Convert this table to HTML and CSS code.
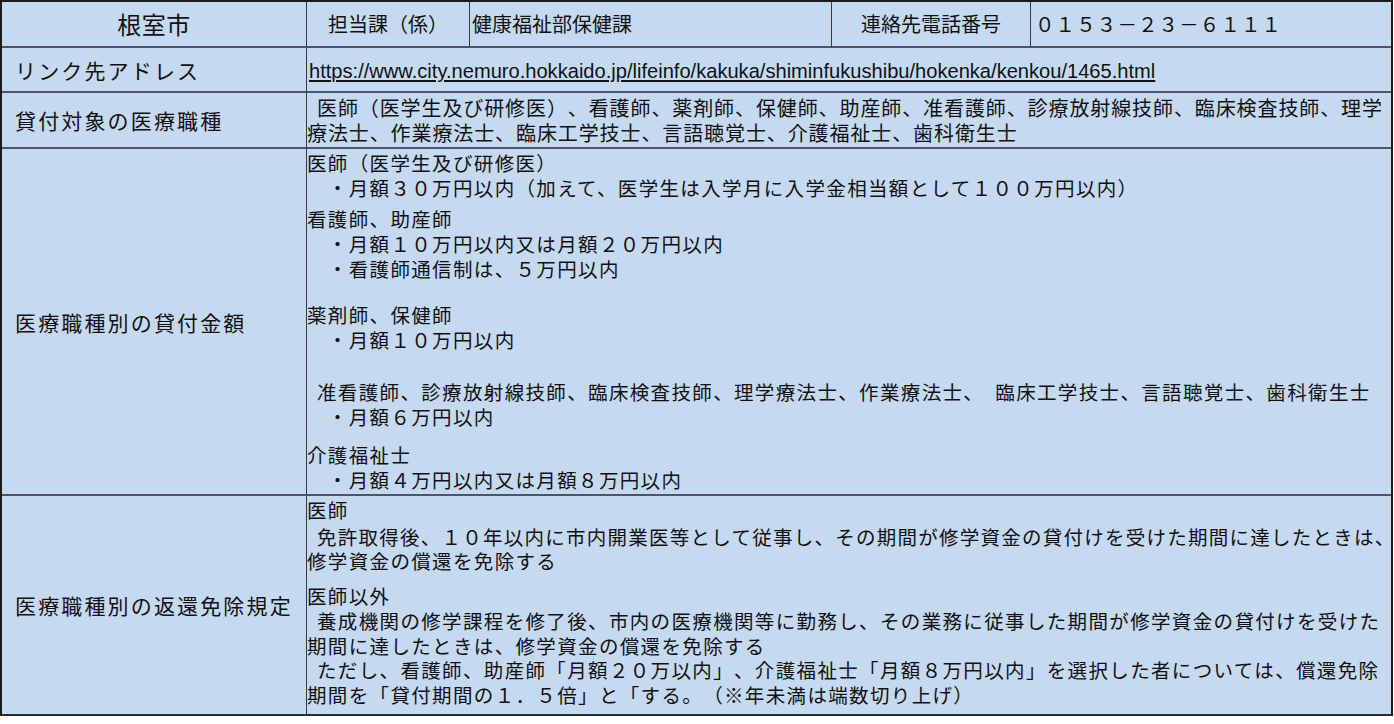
FILE: index.html
```html
<!DOCTYPE html>
<html lang="ja">
<head>
<meta charset="utf-8">
<title>根室市</title>
<link rel="stylesheet" href="styles.css">
</head>
<body>
<div class="sheet">
  <div class="cell head city">根室市</div>
  <div class="cell head center">担当課（係）</div>
  <div class="cell head left">健康福祉部保健課</div>
  <div class="cell head center">連絡先電話番号</div>
  <div class="cell head phone last">０１５３－２３－６１１１</div>

  <div class="cell label">リンク先アドレス</div>
  <div class="cell wide url-cell"><a class="url" href="#">https://www.city.nemuro.hokkaido.jp/lifeinfo/kakuka/shiminfukushibu/hokenka/kenkou/1465.html</a></div>

  <div class="cell label">貸付対象の医療職種</div>
  <div class="cell wide goth">
    <div class="lines">
      <div class="ind">医師（医学生及び研修医）、看護師、薬剤師、保健師、助産師、准看護師、診療放射線技師、臨床検査技師、理学</div>
      <div>療法士、作業療法士、臨床工学技士、言語聴覚士、介護福祉士、歯科衛生士</div>
    </div>
  </div>

  <div class="cell label">医療職種別の貸付金額</div>
  <div class="cell wide min amounts">
    <div class="blk">
      <div>医師（医学生及び研修医）</div>
      <div>　・月額３０万円以内（加えて、医学生は入学月に入学金相当額として１００万円以内）</div>
    </div>
    <div class="blk mt6">
      <div>看護師、助産師</div>
      <div>　・月額１０万円以内又は月額２０万円以内</div>
      <div>　・看護師通信制は、５万円以内</div>
    </div>
    <div class="blk mt21">
      <div>薬剤師、保健師</div>
      <div>　・月額１０万円以内</div>
    </div>
    <div class="blk mt28 tight">
      <div class="ind">准看護師、診療放射線技師、臨床検査技師、理学療法士、作業療法士、&ensp;臨床工学技士、言語聴覚士、歯科衛生士</div>
      <div>　・月額６万円以内</div>
    </div>
    <div class="blk mt14 tight">
      <div>介護福祉士</div>
      <div>　・月額４万円以内又は月額８万円以内</div>
    </div>
  </div>

  <div class="cell label bottom">医療職種別の返還免除規定</div>
  <div class="cell wide min exempt bottom">
    <div class="blk">
      <div>医師</div>
    </div>
    <div class="blk mt2">
      <div class="ind fit">免許取得後、１０年以内に市内開業医等として従事し、その期間が修学資金の貸付けを受けた期間に達したときは、</div>
      <div>修学資金の償還を免除する</div>
    </div>
    <div class="blk mt10">
      <div>医師以外</div>
      <div class="ind">養成機関の修学課程を修了後、市内の医療機関等に勤務し、その業務に従事した期間が修学資金の貸付けを受けた</div>
      <div>期間に達したときは、修学資金の償還を免除する</div>
      <div class="ind">ただし、看護師、助産師「月額２０万以内」、介護福祉士「月額８万円以内」を選択した者については、償還免除</div>
      <div>期間を「貸付期間の１．５倍」と「する。（※年未満は端数切り上げ）</div>
    </div>
  </div>
</div>
</body>
</html>
```

FILE: styles.css
```css
html, body {
  margin: 0;
  padding: 0;
  background: #ffffff;
}

body {
  font-family: "Noto Sans CJK JP", sans-serif;
  color: #111111;
  text-spacing-trim: space-all;
}

.sheet {
  display: grid;
  grid-template-columns: 305px 163px 362px 199px 360px;
  grid-template-rows: 46px 45px 56px 347px 220px;
  width: max-content;
  border-top: 2px solid #1c1c1c;
  border-left: 2px solid #1c1c1c;
  border-right: 2px solid #1c1c1c;
  background: #c5d9f1;
}

.cell {
  box-sizing: border-box;
  border-right: 1px solid #3a3a3a;
  border-bottom: 2px solid #4b5666;
  overflow: visible;
  white-space: nowrap;
}

.cell.last,
.cell.wide {
  border-right: none;
}

.cell.bottom {
  border-bottom: 2px solid #2a2f36;
}

.wide {
  grid-column: 2 / 6;
}

.head {
  display: flex;
  align-items: center;
  font-size: 20px;
  line-height: 24px;
}

.head.city {
  justify-content: center;
  font-size: 24px;
  letter-spacing: 0.5px;
}

.head.center {
  justify-content: center;
}

.head.left {
  padding-left: 2px;
}

.head.phone {
  padding-left: 4px;
  font-size: 19.5px;
  letter-spacing: 1.1px;
}

.label {
  display: flex;
  align-items: center;
  padding-left: 13px;
  font-size: 21px;
  letter-spacing: 2.15px;
  line-height: 26px;
}

.url-cell {
  display: flex;
  align-items: center;
  padding-left: 2px;
  padding-top: 3px;
}

.url {
  font-family: "Liberation Sans", Arial, sans-serif;
  font-size: 20.1px;
  color: #111111;
  text-decoration: underline;
  text-underline-offset: 2px;
}

.goth {
  display: flex;
  align-items: center;
  font-size: 20px;
  letter-spacing: 0.9px;
  line-height: 25px;
}

.min {
  font-size: 19.5px;
  letter-spacing: 1.35px;
}

.amounts {
  padding-top: 1px;
  line-height: 25px;
}

.amounts .tight {
  line-height: 24.5px;
}

.exempt {
  padding-top: 2px;
  line-height: 24.7px;
}

.ind {
  padding-left: 10px;
}

.fit {
  letter-spacing: 1.25px;
}

.mt2 { margin-top: 2px; }
.mt6 { margin-top: 6px; }
.mt10 { margin-top: 10px; }
.mt14 { margin-top: 14px; }
.mt21 { margin-top: 21px; }
.mt28 { margin-top: 28px; }
```
